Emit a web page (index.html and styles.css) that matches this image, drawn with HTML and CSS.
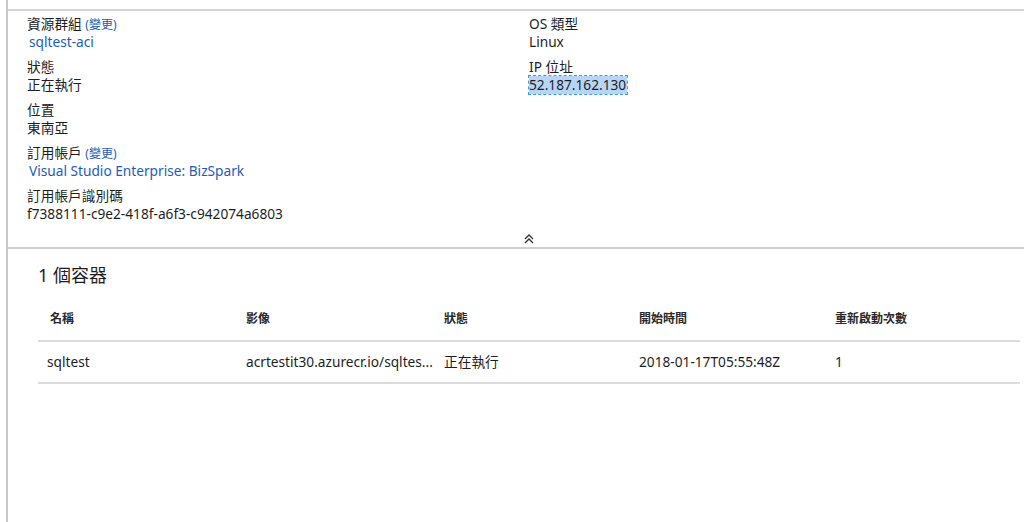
FILE: index.html
```html
<!DOCTYPE html>
<html lang="zh-Hant">
<head>
  <meta charset="UTF-8" />
  <title>sqltest-aci</title>
  <link rel="stylesheet" href="styles.css">
</head>
<body>

  <div class="blade">
    <div class="blade-top"></div>

    <div class="essentials">
      <div class="col">
        <div class="prop">
          <div class="prop-label">資源群組 <a class="change" href="#">(變更)</a></div>
          <div class="prop-value"><a class="link" href="#">sqltest-aci</a></div>
        </div>
        <div class="prop">
          <div class="prop-label">狀態</div>
          <div class="prop-value">正在執行</div>
        </div>
        <div class="prop">
          <div class="prop-label">位置</div>
          <div class="prop-value">東南亞</div>
        </div>
        <div class="prop">
          <div class="prop-label">訂用帳戶 <a class="change" href="#">(變更)</a></div>
          <div class="prop-value"><a class="link" href="#">Visual Studio Enterprise: BizSpark</a></div>
        </div>
        <div class="prop">
          <div class="prop-label">訂用帳戶識別碼</div>
          <div class="prop-value">f7388111-c9e2-418f-a6f3-c942074a6803</div>
        </div>
      </div>
      <div class="col">
        <div class="prop">
          <div class="prop-label">OS 類型</div>
          <div class="prop-value">Linux</div>
        </div>
        <div class="prop">
          <div class="prop-label">IP 位址</div>
          <div class="prop-value"><span class="selected">52.187.162.130</span></div>
        </div>
      </div>
    </div>

    <div class="collapse">
      <svg width="10" height="10" viewBox="0 0 10 10">
        <polyline points="1,5 5,1 9,5" fill="none" stroke="#333" stroke-width="1.3" />
        <polyline points="1,9 5,5 9,9" fill="none" stroke="#333" stroke-width="1.3" />
      </svg>
    </div>

    <div class="containers">
      <h2>1 個容器</h2>
      <table class="grid">
        <colgroup>
          <col style="width: 199px">
          <col style="width: 198px">
          <col style="width: 195px">
          <col style="width: 196px">
          <col>
        </colgroup>
        <thead>
          <tr>
            <th class="first">名稱</th>
            <th>影像</th>
            <th>狀態</th>
            <th>開始時間</th>
            <th>重新啟動次數</th>
          </tr>
        </thead>
        <tbody>
          <tr>
            <td>sqltest</td>
            <td>acrtestit30.azurecr.io/sqltes...</td>
            <td>正在執行</td>
            <td>2018-01-17T05:55:48Z</td>
            <td>1</td>
          </tr>
        </tbody>
      </table>
    </div>
  </div>

</body>
</html>
```

FILE: styles.css
```css
body {
  margin: 0;
  background: #fff;
  font-family: 'Segoe UI', 'Noto Sans', 'Noto Sans CJK TC', sans-serif;
  font-size: 13.7px;
  color: #1e1e1e;
}

.blade {
  margin-left: 6px;
  border-left: 2px solid #c8c8c8;
  height: 522px;
  overflow: hidden;
}

.blade-top {
  height: 9px;
  border-bottom: 2px solid #d4d4d4;
}

.essentials {
  display: grid;
  grid-template-columns: 502px 1fr;
  padding: 3px 0 0 19px;
}

.prop {
  margin-bottom: 5px;
}

.prop:last-child {
  margin-bottom: 0;
}

.prop-label {
  height: 18px;
  line-height: 18px;
  padding-top: 1px;
  white-space: nowrap;
}

.prop-value {
  height: 19px;
  line-height: 17px;
  white-space: nowrap;
}

.change {
  font-size: 12px;
  color: #1f5db3;
  text-decoration: none;
}

.link {
  color: #1f5db3;
  text-decoration: none;
  padding-left: 2px;
}

.selected {
  display: inline-block;
  line-height: 18px;
  background: #b7d6f7;
  outline: 1px dashed #3b9be8;
  padding: 0 1px 0 0;
}

.collapse {
  height: 20px;
  padding: 0 0 3px 516px;
  display: flex;
  align-items: flex-end;
}

.collapse svg {
  display: block;
}

.containers {
  border-top: 2px solid #d0d0d0;
  padding: 14px 4px 0 30px;
}

h2 {
  margin: 0;
  height: 24px;
  font-size: 18px;
  font-weight: normal;
  line-height: 24px;
  color: #1e1e1e;
}

.grid {
  width: 982px;
  margin-top: 24px;
  border-collapse: collapse;
  table-layout: fixed;
}

.grid th {
  height: 16px;
  text-align: left;
  font-size: 12px;
  font-weight: bold;
  color: #2a2a2a;
  line-height: 16px;
  padding: 0 9px 13px 9px;
  border-bottom: 2px solid #dcdcdc;
}

.grid th.first {
  padding-left: 12px;
}

.grid td {
  height: 20px;
  line-height: 20px;
  padding: 10px 9px 10px 9px;
  border-bottom: 2px solid #dcdcdc;
  white-space: nowrap;
}
```
